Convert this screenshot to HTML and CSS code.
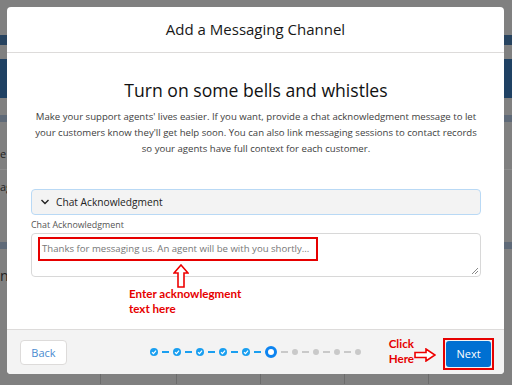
FILE: index.html
```html
<!DOCTYPE html>
<html lang="en">
<head>
    <meta charset="UTF-8">
    <meta name="viewport" content="width=device-width, initial-scale=1.0">
    <title>Add a Messaging Channel</title>
    <link rel="stylesheet" href="styles.css">
</head>
<body>
    <!-- dimmed page behind the modal -->
    <div class="backdrop">
        <div class="strip gap-35"></div>
        <div class="strip nav"></div>
        <div class="strip gap-14"></div>
        <div class="strip banner"></div>
        <div class="strip gap-17"></div>
        <div class="strip slate"></div>
        <div class="strip rows">
            <div class="row-text">e</div>
            <div class="row-line"></div>
            <div class="row-text">ag</div>
        </div>
        <div class="strip slate"></div>
        <div class="strip rows-2">
            <div class="row-text big">nı</div>
        </div>
        <div class="table-foot">
            <span></span><span></span><span></span><span></span><span></span>
        </div>
    </div>

    <div class="modal">
        <div class="modal-header">Add a Messaging Channel</div>

        <div class="modal-body">
            <h2 class="title">Turn on some bells and whistles</h2>
            <p class="intro">
                Make your support agents' lives easier. If you want, provide a chat acknowledgment message to let<br>
                your customers know they'll get help soon. You can also link messaging sessions to contact records<br>
                so your agents have full context for each customer.
            </p>

            <div class="accordion">
                <svg class="chevron" width="10" height="10" viewBox="0 0 10 10">
                    <path d="M1.5 3 L5 6.5 L8.5 3" fill="none" stroke="#222" stroke-width="1.4"/>
                </svg>
                <span class="accordion-title">Chat Acknowledgment</span>
            </div>

            <label class="field-label">Chat Acknowledgment</label>
            <div class="textarea">
                <span class="placeholder">Thanks for messaging us. An agent will be with you shortly...</span>
                <svg class="resize" width="7" height="7" viewBox="0 0 7 7">
                    <path d="M1 7 L7 1 M4 7 L7 4" stroke="#888" stroke-width="1"/>
                </svg>
            </div>

            <!-- annotation over the textarea -->
            <div class="mark-box"></div>
            <svg class="arrow-up" width="16" height="24" viewBox="0 0 16 24">
                <path d="M8 1 L15 9 L11 9 L11 23 L5 23 L5 9 L1 9 Z" fill="#fff" stroke="#e00" stroke-width="1.6" stroke-linejoin="miter"/>
            </svg>
            <div class="note note-enter">Enter acknowlegment<br>text here</div>
        </div>

        <div class="modal-footer">
            <button class="btn-back">Back</button>

            <div class="progress">
                <span class="dot done"><svg width="6" height="6" viewBox="0 0 6 6"><path d="M1 3.2 L2.5 4.6 L5 1.6" fill="none" stroke="#fff" stroke-width="1.2"/></svg></span>
                <span class="line done"></span>
                <span class="dot done"><svg width="6" height="6" viewBox="0 0 6 6"><path d="M1 3.2 L2.5 4.6 L5 1.6" fill="none" stroke="#fff" stroke-width="1.2"/></svg></span>
                <span class="line done"></span>
                <span class="dot done"><svg width="6" height="6" viewBox="0 0 6 6"><path d="M1 3.2 L2.5 4.6 L5 1.6" fill="none" stroke="#fff" stroke-width="1.2"/></svg></span>
                <span class="line done"></span>
                <span class="dot done"><svg width="6" height="6" viewBox="0 0 6 6"><path d="M1 3.2 L2.5 4.6 L5 1.6" fill="none" stroke="#fff" stroke-width="1.2"/></svg></span>
                <span class="line done"></span>
                <span class="dot done"><svg width="6" height="6" viewBox="0 0 6 6"><path d="M1 3.2 L2.5 4.6 L5 1.6" fill="none" stroke="#fff" stroke-width="1.2"/></svg></span>
                <span class="line done"></span>
                <span class="dot current"></span>
                <span class="line"></span>
                <span class="dot todo"></span>
                <span class="line"></span>
                <span class="dot todo"></span>
                <span class="line"></span>
                <span class="dot todo"></span>
                <span class="line"></span>
                <span class="dot todo"></span>
            </div>

            <div class="next-wrap">
                <div class="note note-click">Click<br>Here</div>
                <svg class="arrow-right" width="22" height="14" viewBox="0 0 22 14">
                    <path d="M1 4.5 L12 4.5 L12 1 L21 7 L12 13 L12 9.5 L1 9.5 Z" fill="#fff" stroke="#e00" stroke-width="1.6"/>
                </svg>
                <div class="next-box">
                    <button class="btn-next">Next</button>
                </div>
            </div>
        </div>
    </div>
</body>
</html>
```

FILE: styles.css
```css
* {
    box-sizing: border-box;
}
body {
    margin: 0;
    width: 512px;
    height: 385px;
    overflow: hidden;
    background: #808080;
    font-family: "Open Sans", "Noto Sans", sans-serif;
    position: relative;
}

/* backdrop */
.backdrop {
    display: flex;
    flex-direction: column;
}
.strip {
    width: 100%;
}
.gap-35 { height: 35px; }
.gap-14 { height: 14px; }
.gap-17 { height: 17px; }
.nav {
    height: 10px;
    background: #27435f;
}
.banner {
    height: 39px;
    background: #1f4163;
}
.slate {
    height: 7px;
    background: #5f6a78;
}
.rows {
    height: 120px;
    padding-top: 25px;
}
.rows-2 {
    height: 124px;
    padding-top: 20px;
}
.row-text {
    color: #222;
    font-size: 11px;
    line-height: 14px;
}
.row-text.big {
    font-size: 14px;
}
.row-line {
    height: 1px;
    background: #8c8c8c;
    margin: 8px 0 10px;
}
.table-foot {
    display: flex;
    height: 11px;
}
.table-foot span {
    border-left: 1px solid #6c6c6c;
    width: 90px;
}
.table-foot span:first-child {
    margin-left: 100px;
    width: 81px;
}

/* modal */
.modal {
    position: absolute;
    left: 7px;
    top: 7px;
    width: 497px;
    height: 367px;
    background: white;
    border-radius: 4px;
    display: flex;
    flex-direction: column;
    overflow: hidden;
}
.modal-header {
    height: 46px;
    flex: none;
    border-bottom: 1px solid #dddbda;
    display: flex;
    align-items: center;
    justify-content: center;
    font-size: 15px;
    color: #181818;
    padding-bottom: 1px;
}
.modal-body {
    flex: 1;
    position: relative;
    padding: 24px 23px 0 24px;
}
.title {
    margin: 0;
    text-align: center;
    font-weight: normal;
    font-size: 17.6px;
    line-height: 26px;
    color: #111;
}
.intro {
    margin: 6px 0 0;
    text-align: center;
    font-size: 9.6px;
    line-height: 16px;
    color: #3e3e3e;
    white-space: nowrap;
}
.accordion {
    margin-top: 32px;
    height: 26px;
    background: #f3f3f3;
    border: 1px solid #b9d9f5;
    border-radius: 4px;
    display: flex;
    align-items: center;
    padding-left: 8px;
    gap: 6px;
    font-size: 10.2px;
    color: #222;
}
.chevron {
    flex: none;
}
.field-label {
    display: block;
    margin-top: 3px;
    font-size: 8.9px;
    line-height: 14px;
    color: #555;
}
.textarea {
    margin-top: 1px;
    height: 44px;
    border: 1px solid #d8d8d8;
    border-radius: 4px;
    position: relative;
    padding: 8px 0 0 10px;
    font-size: 9.6px;
    line-height: 14px;
}
.placeholder {
    color: #777;
}
.resize {
    position: absolute;
    right: 2px;
    bottom: 2px;
}

/* annotations */
.mark-box {
    position: absolute;
    left: 31px;
    top: 184px;
    width: 280px;
    height: 24px;
    border: 2px solid #e60000;
}
.arrow-up {
    position: absolute;
    left: 166px;
    top: 211px;
}
.note {
    color: #e60000;
    font-family: "Lato", "Liberation Sans", sans-serif;
    font-weight: bold;
    font-size: 11.6px;
    line-height: 15px;
}
.note-enter {
    position: absolute;
    left: 122px;
    top: 233px;
}

/* footer */
.modal-footer {
    height: 45px;
    flex: none;
    background: #f3f3f3;
    border-top: 1px solid #dddbda;
    display: grid;
    grid-template-columns: 1fr auto 1fr;
    align-items: center;
    padding: 0 13px;
}
.btn-back {
    justify-self: start;
    width: 47px;
    height: 25px;
    background: white;
    border: 1px solid #dddbda;
    border-radius: 4px;
    color: #4a8bd0;
    font-family: inherit;
    font-size: 11px;
    padding: 0;
}
.progress {
    display: flex;
    align-items: center;
    gap: 4px;
}
.dot {
    display: flex;
    align-items: center;
    justify-content: center;
    border-radius: 50%;
}
.dot.done {
    width: 8px;
    height: 8px;
    background: #1a9ff0;
}
.dot.current {
    width: 12px;
    height: 12px;
    border: 3px solid #0d84f0;
    background: white;
}
.dot.todo {
    width: 6px;
    height: 6px;
    background: #c9c9c9;
}
.line {
    width: 7px;
    height: 1.5px;
    background: #c9c9c9;
}
.line.done {
    background: #1a9ff0;
}
.next-wrap {
    justify-self: end;
    position: relative;
    margin-top: 3px;
}
.next-box {
    border: 2px solid #e60000;
    padding: 1px;
    margin-right: -3px;
}
.btn-next {
    display: block;
    width: 45px;
    height: 26px;
    background: #0070d2;
    border: none;
    border-radius: 3px;
    color: white;
    font-family: inherit;
    font-size: 11px;
    padding: 0;
}
.note-click {
    position: absolute;
    right: 77px;
    top: -2px;
}
.arrow-right {
    position: absolute;
    right: 55px;
    top: 10px;
}
```
